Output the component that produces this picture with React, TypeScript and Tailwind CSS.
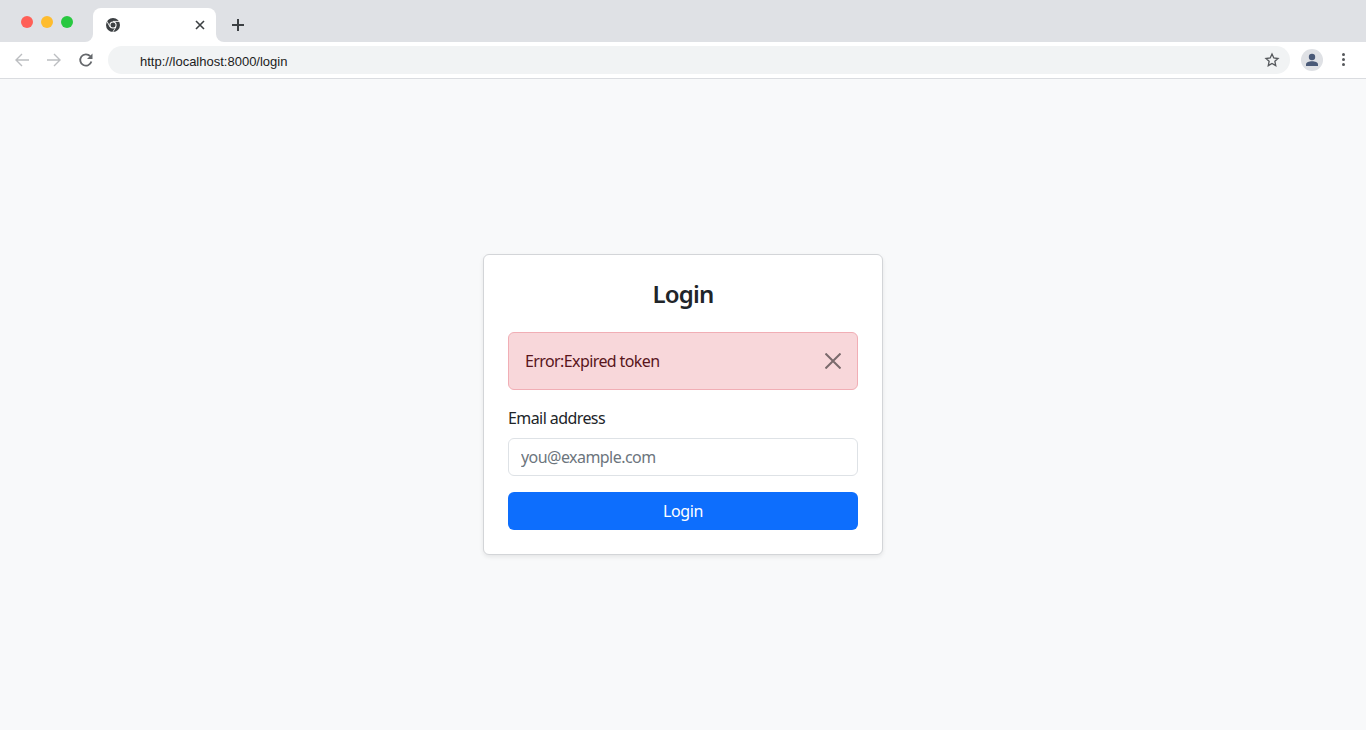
const uiFont = "font-['Noto_Sans','Open_Sans',sans-serif]";

function TabFlare({ side }: { side: "left" | "right" }) {
  return (
    <span className={side === "left" ? "absolute bottom-0 -left-2 h-2 w-2 bg-white" : "absolute bottom-0 -right-2 h-2 w-2 bg-white"}>
      <span className={side === "left" ? "block h-2 w-2 rounded-br-lg bg-[#dfe1e5]" : "block h-2 w-2 rounded-bl-lg bg-[#dfe1e5]"} />
    </span>
  );
}

function ChromeIcon() {
  return (
    <svg width="14" height="14" viewBox="0 0 14 14" className="shrink-0">
      <circle cx="7" cy="7" r="7" fill="#3c4043" />
      <circle cx="7" cy="7" r="3.6" fill="#fff" />
      <circle cx="7" cy="7" r="2.5" fill="#3c4043" />
      <path d="M7 3.4h6.2M4 8.9 1 3.4M9.9 9 6.8 14" stroke="#fff" strokeWidth="0.9" fill="none" />
    </svg>
  );
}

function TitleBar() {
  return (
    <div className="flex h-[42px] items-end bg-[#dfe1e5]">
      <div className="flex h-[42px] w-[93px] items-center gap-[8px] pl-[21px] pt-[2px]">
        <span className="h-[12px] w-[12px] rounded-full bg-[#ff5f57]" />
        <span className="h-[12px] w-[12px] rounded-full bg-[#febc2e]" />
        <span className="h-[12px] w-[12px] rounded-full bg-[#28c840]" />
      </div>
      <div className="relative flex h-[34px] w-[123px] items-center rounded-t-lg bg-white pl-[13px] pr-[11px]">
        <TabFlare side="left" />
        <TabFlare side="right" />
        <ChromeIcon />
        <svg width="10" height="10" viewBox="0 0 10 10" className="ml-auto">
          <path d="M1 1l8 8M9 1L1 9" stroke="#3c4043" strokeWidth="1.6" />
        </svg>
      </div>
      <div className="flex h-[34px] items-center pl-[16px]">
        <svg width="12" height="12" viewBox="0 0 12 12">
          <path d="M6 0v12M0 6h12" stroke="#3c4043" strokeWidth="2" />
        </svg>
      </div>
    </div>
  );
}

function ToolBar() {
  return (
    <div className="flex h-[37px] items-center border-b border-[#dadce0] bg-white pb-[1px]">
      <div className="flex w-[108px] items-center gap-[16px] pl-[14px]">
        <svg width="16" height="16" viewBox="0 0 16 16" fill="none" stroke="#bcbec1" strokeWidth="1.4">
          <path d="M15 8H2M8 2 2 8l6 6" />
        </svg>
        <svg width="16" height="16" viewBox="0 0 16 16" fill="none" stroke="#bcbec1" strokeWidth="1.4">
          <path d="M1 8h13M8 2l6 6-6 6" />
        </svg>
        <svg width="16" height="16" viewBox="0 0 16 16" fill="none">
          <path d="M13.400 9.600A5.700 5.700 0 1 1 12.200 4.200" stroke="#65686c" strokeWidth="1.800" />
          <path d="M14.500 1.500V7H9z" fill="#65686c" />
        </svg>
      </div>
      <div className="flex h-[28px] w-[1182px] items-center rounded-full bg-[#f1f3f4] pl-[32px] pr-[10px]">
        <span className="pt-[4px] font-['Liberation_Sans',Arial,sans-serif] text-[13px] leading-none text-[#1c1c1c]">http://localhost:8000/login</span>
        <svg width="16" height="16" viewBox="0 0 24 24" fill="none" stroke="#55585c" strokeWidth="2" className="ml-auto">
          <path d="M12 3l2.700 6 6.300.7-4.700 4.300 1.300 6.500L12 17.200 6.400 20.500l1.300-6.500L3 9.700 9.300 9z" />
        </svg>
      </div>
      <div className="ml-[11px] flex h-[22px] w-[22px] items-center justify-center rounded-full bg-[#dfe1e5]">
        <svg width="14" height="14" viewBox="0 0 14 14" fill="#4a5a78">
          <circle cx="7" cy="4" r="3.200" />
          <path d="M1 13v-1.500C1 9.300 4 8.300 7 8.300s6 1 6 3.200V13z" />
        </svg>
      </div>
      <div className="ml-[19px] flex flex-col gap-[2px]">
        <span className="h-[3px] w-[3px] rounded-full bg-[#55585c]" />
        <span className="h-[3px] w-[3px] rounded-full bg-[#55585c]" />
        <span className="h-[3px] w-[3px] rounded-full bg-[#55585c]" />
      </div>
    </div>
  );
}

function LoginCard() {
  return (
    <div className="w-[400px] rounded-md border border-[#d3d5d8] bg-white p-6 shadow-[0_2px_4px_rgba(0,0,0,0.08)]">
      <h1 className="mb-6 text-center text-[24px] leading-[29px] font-semibold tracking-[-0.8px] text-[#212529]">Login</h1>
      <div className="mb-4 flex h-[58px] items-center justify-between rounded-md border border-[#f1aeb5] bg-[#f8d7da] pl-4 pr-4 text-[#58151c]">
        <span className="text-[16px] tracking-[-0.6px]">Error:Expired token</span>
        <svg width="16" height="16" viewBox="0 0 16 16" stroke="#7a6a6c" strokeWidth="2">
          <path d="M0.500 0.500l15 15M15.500 0.500l-15 15" />
        </svg>
      </div>
      <label className="mb-2 block text-[16px] leading-6 tracking-[-0.58px] text-[#212529]">Email address</label>
      <input
        type="email"
        placeholder="you@example.com"
        className="mb-4 block h-[38px] w-full rounded-md border border-[#dee2e6] bg-white px-3 text-[16px] tracking-[-0.55px] outline-none placeholder:text-[#6c757d]"
      />
      <button className="block h-[38px] w-full rounded-md bg-[#0d6efd] text-[16px] tracking-[-0.35px] text-white">Login</button>
    </div>
  );
}

export default function App() {
  return (
    <div className={`flex h-[730px] w-[1366px] flex-col overflow-hidden bg-[#f8f9fa] ${uiFont}`}>
      <TitleBar />
      <ToolBar />
      <main className="flex flex-1 items-center justify-center pb-[1px]">
        <LoginCard />
      </main>
    </div>
  );
}
